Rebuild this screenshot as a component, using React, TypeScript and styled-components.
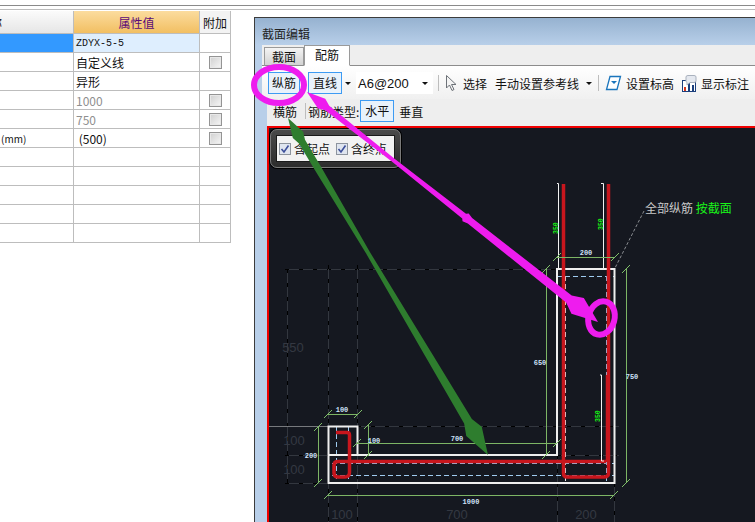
import React from 'react';
import styled, { createGlobalStyle } from 'styled-components';

const ROWS = [
  { value: 'ZDYX-5-5', kind: 'code', selected: true },
  { value: '自定义线', check: true },
  { value: '异形' },
  { value: '1000', muted: true, check: true },
  { value: '750', muted: true, check: true },
  { name: '(mm)', value: ' (500)', check: true },
  {},
  {},
  {},
  {},
  {},
];

type Pt = [number, number];

// polygon along a-b, stops are [fraction along the line, half width]
function ribbon(a: Pt, b: Pt, stops: [number, number][]) {
  const dx = b[0] - a[0];
  const dy = b[1] - a[1];
  const len = Math.hypot(dx, dy);
  const nx = -dy / len;
  const ny = dx / len;
  const left = stops.map(([t, w]) => `${a[0] + dx * t + nx * w},${a[1] + dy * t + ny * w}`);
  const right = stops.map(([t, w]) => `${a[0] + dx * t - nx * w},${a[1] + dy * t - ny * w}`);
  return [...left, ...right.reverse()].join(' ');
}

function Dash({ x1, y1, x2, y2 }: { x1: number; y1: number; x2: number; y2: number }) {
  return (
    <g>
      <line x1={x1} y1={y1} x2={x2} y2={y2} stroke="#33373f" />
      <line x1={x1} y1={y1} x2={x2} y2={y2} stroke="#000" strokeDasharray="4 10" />
    </g>
  );
}

function Tick({ x, y }: { x: number; y: number }) {
  return <path d={`M${x - 4} ${y + 4}L${x + 4} ${y - 4}`} stroke="#7fbf6a" fill="none" />;
}

function Drawing() {
  const green = '#7db565';
  const red = '#c8161d';
  const blue = '#9fcbf0';
  return (
    <DrawingSvg viewBox="269 128 486 394">
      {/* grid lines */}
      <Dash x1={285} y1={269.5} x2={555} y2={269.5} />
      <Dash x1={287.5} y1={269} x2={287.5} y2={484} />
      <Dash x1={328.5} y1={265} x2={328.5} y2={522} />
      <Dash x1={357.5} y1={265} x2={357.5} y2={522} />
      <Dash x1={557.5} y1={455} x2={557.5} y2={522} />
      <Dash x1={614.5} y1={483} x2={614.5} y2={522} />
      <Dash x1={285} y1={455.5} x2={328} y2={455.5} />
      <Dash x1={285} y1={483.5} x2={328} y2={483.5} />
      <Dash x1={357} y1={426.5} x2={619} y2={426.5} />
      <Dash x1={557} y1={455.5} x2={619} y2={455.5} />
      <line x1={269} y1={426.5} x2={328} y2={426.5} stroke="#77797d" />

      <DimText x={293} y={352}>550</DimText>
      <DimText x={294} y={445}>100</DimText>
      <DimText x={294} y={474}>100</DimText>
      <DimText x={342} y={519}>100</DimText>
      <DimText x={457} y={519}>700</DimText>
      <DimText x={586} y={519}>200</DimText>

      {/* dashed bar outlines */}
      <g stroke={blue} strokeDasharray="5 3" fill="none">
        <line x1={332} y1={463.5} x2={615} y2={463.5} />
        <line x1={332} y1={475.5} x2={615} y2={475.5} />
        <line x1={336.5} y1={426} x2={336.5} y2={483} />
        <line x1={348.5} y1={426} x2={348.5} y2={483} />
        <line x1={606.5} y1={276} x2={606.5} y2={483} />
        <line x1={557} y1={276.5} x2={615} y2={276.5} />
      </g>
      <line x1={565.5} y1={276} x2={565.5} y2={483} stroke="#e8e8e8" strokeDasharray="5 3" />

      {/* section outline */}
      <polyline
        points="357,455 328.5,455 328.5,483 614.5,483 614.5,269 557,269 557,455 357.5,455 357.5,426.5 328.5,426.5 328.5,456"
        fill="none"
        stroke="#efefef"
        strokeWidth={2}
      />

      {/* rebar */}
      <g stroke={red} fill="none" strokeWidth={3.5}>
        <path d="M336 432.5H347Q349.500 432.500 349.500 435V472Q349.500 477 345 477H338Q334 477 334 473V465Q334 461.500 338 461.500H606" />
        <path d="M563.500 184V473Q563.500 477 567 477H604Q608.500 477 608.500 473V184" />
        <path d="M607.500 375V462" />
      </g>
      <polyline points="557,183.500 558.500,183.500 558.500,268" fill="none" stroke="#f2f2f2" />
      <polyline points="601,183.500 603.500,183.500 603.500,268" fill="none" stroke="#f2f2f2" />
      <polyline points="600,375 601.500,375 601.500,461 604,461" fill="none" stroke="#f2f2f2" />
      <TinyMark transform="translate(558 234) rotate(-90)" x={0} y={0}>350</TinyMark>
      <TinyMark transform="translate(603 230) rotate(-90)" x={0} y={0}>350</TinyMark>
      <TinyMark transform="translate(600 422) rotate(-90)" x={0} y={0}>350</TinyMark>

      {/* dimensions */}
      <g stroke={green} fill="none">
        <line x1={557} y1={257.500} x2={615} y2={257.500} />
        <line x1={328} y1={414.500} x2={358} y2={414.500} />
        <line x1={546.500} y1={269} x2={546.500} y2={455} />
        <line x1={626.500} y1={269} x2={626.500} y2={483} />
        <line x1={357} y1={443.500} x2={557} y2={443.500} />
        <line x1={328} y1={495.500} x2={614} y2={495.500} />
        <line x1={368.500} y1={424} x2={368.500} y2={456} />
        <line x1={318.500} y1={426} x2={318.500} y2={483} />
      </g>
      <Tick x={557} y={257} />
      <Tick x={615} y={257} />
      <Tick x={328} y={414} />
      <Tick x={358} y={414} />
      <Tick x={546} y={269} />
      <Tick x={546} y={455} />
      <Tick x={626} y={269} />
      <Tick x={626} y={483} />
      <Tick x={357} y={443} />
      <Tick x={557} y={443} />
      <Tick x={328} y={495} />
      <Tick x={614} y={495} />
      <Tick x={368} y={425} />
      <Tick x={368} y={455} />
      <Tick x={318} y={427} />
      <Tick x={318} y={483} />

      <SizeText x={586} y={255}>200</SizeText>
      <SizeText x={342} y={412}>100</SizeText>
      <SizeText x={374} y={443}>100</SizeText>
      <SizeText x={457} y={441}>700</SizeText>
      <SizeText x={311} y={458}>200</SizeText>
      <SizeText x={471} y={504}>1000</SizeText>
      <SizeText x={540} y={365}>650</SizeText>
      <SizeText x={632} y={379}>750</SizeText>

      {/* leader and note */}
      <line x1={644} y1={211} x2={615} y2={268} stroke="#8a8d92" strokeDasharray="3 2" />
      <NoteText x={645} y={213}>
        全部纵筋 <tspan fill="#19f519">按截面</tspan>
      </NoteText>
    </DrawingSvg>
  );
}

function Annotations() {
  const magenta = '#ee1cee';
  const green = '#2e7d2e';
  return (
    <AnnotationSvg viewBox="0 0 755 522">
      <polygon
        fill={green}
        points={ribbon([288, 118], [488, 455], [
          [0, 0],
          [0.05, 6],
          [0.07, 3.5],
          [0.15, 3.5],
          [0.4, 2],
          [0.7, 3.5],
          [0.9, 4.5],
          [0.93, 9],
          [1, 0],
        ])}
      />
      <polygon
        fill={magenta}
        points={ribbon([307, 92], [598, 322], [
          [0, 0],
          [0.05, 6],
          [0.07, 3],
          [0.3, 2],
          [0.54, 3],
          [0.545, 5],
          [0.56, 3.500],
          [0.9, 4.500],
          [0.93, 10],
          [1, 0],
        ])}
      />
      <ellipse cx={279} cy={85} rx={25} ry={18} fill="none" stroke={magenta} strokeWidth={6} />
      <ellipse cx={601.5} cy={318} rx={13} ry={17} fill="none" stroke={magenta} strokeWidth={6} transform="rotate(15 601.500 318)" />
    </AnnotationSvg>
  );
}

function CheckMark() {
  return (
    <svg width="12" height="12" viewBox="0 0 12 12">
      <rect x="0.5" y="0.5" width="11" height="11" fill="#dfe5ef" stroke="#8d949e" />
      <path d="M2.500 6L5 9L9.500 2.500" fill="none" stroke="#3c4f9a" strokeWidth="1.600" />
    </svg>
  );
}

export default function App() {
  return (
    <Page>
      <GlobalStyle />
      <TopRules />
      <Main>
        <PropertyTable>
          <NameHead>
            <span>称</span>
          </NameHead>
          <ValueHead>属性值</ValueHead>
          <ExtraHead>附加</ExtraHead>
          {ROWS.map((row, idx) => (
            <React.Fragment key={idx}>
              <NameCell $selected={row.selected}>{row.name}</NameCell>
              <ValueCell $selected={row.selected} $muted={row.muted} $code={row.kind === 'code'}>
                {row.value}
              </ValueCell>
              <ExtraCell>{row.check && <TableCheck />}</ExtraCell>
            </React.Fragment>
          ))}
        </PropertyTable>

        <Window>
          <TitleBar>截面编辑</TitleBar>
          <TabStrip>
            <Tab>截面</Tab>
            <Tab $active>配筋</Tab>
          </TabStrip>
          <ToolRow>
            <ToolButton $active $width={32}>
              纵筋
            </ToolButton>
            <ToolButton $active $width={34} $gap={8}>
              直线
            </ToolButton>
            <CaretMark />
            <Combo>
              A6@200
              <CaretMark />
            </Combo>
            <Divider />
            <svg width="12" height="18" viewBox="0 0 12 18">
              <path d="M1.500 1.500V14L4.500 11L7 16.500L9 15.500L6.500 10.500H11Z" fill="#f4f4f4" stroke="#6d7278" />
            </svg>
            <ToolLabel $gap={6}>选择</ToolLabel>
            <ToolLabel $gap={8}>手动设置参考线</ToolLabel>
            <CaretMark $gap={7} />
            <Divider $gap={1} />
            <svg width="17" height="16" viewBox="0 0 17 16">
              <path d="M5 1.500H15.500L12 14.500H1.500Z" fill="#fff" stroke="#1b75bc" strokeWidth="1.300" />
              <path d="M6 6H12L9 9Z" fill="#1b75bc" />
            </svg>
            <ToolLabel $gap={4}>设置标高</ToolLabel>
            <IconSlot>
              <svg width="15" height="17" viewBox="0 0 15 17">
                <rect x="0.500" y="5.500" width="13" height="11" fill="#fff" stroke="#1c3f7c" />
                <rect x="2" y="12" width="2" height="4" fill="#d5391f" />
                <rect x="6" y="8" width="2" height="8" fill="#1c3f7c" />
                <rect x="10" y="10" width="2" height="6" fill="#1c3f7c" />
                <path d="M4 2Q4 .500 6 .500H12Q14 .500 14 2V6Q14 7.500 12 7.500H8L5 10V7.500Q4 7 4 6Z" fill="#e4e8ef" stroke="#a9b1bd" />
              </svg>
            </IconSlot>
            <ToolLabel $gap={4}>显示标注</ToolLabel>
          </ToolRow>
          <SubRow>
            <ToolLabel $gap={6}>横筋</ToolLabel>
            <Divider $gap={8} $rightGap={2} />
            <ToolLabel>钢筋类型:</ToolLabel>
            <ToolButton $active $width={34} $gap={1}>
              水平
            </ToolButton>
            <ToolLabel $gap={5}>垂直</ToolLabel>
          </SubRow>
          <CanvasArea>
            <Drawing />
            <FloatPanel>
              <FloatInner>
                <FloatOption>
                  <CheckMark />
                  含起点
                </FloatOption>
                <FloatOption>
                  <CheckMark />
                  含终点
                </FloatOption>
              </FloatInner>
            </FloatPanel>
          </CanvasArea>
        </Window>
      </Main>
      <Annotations />
    </Page>
  );
}

const CJK = '"Noto Sans CJK SC", "Liberation Sans", sans-serif';

const GlobalStyle = createGlobalStyle`
  html, body {
    margin: 0;
    background: #fff;
    font-family: ${CJK};
    font-size: 12px;
    color: #111;
  }
`;

const Page = styled.div`
  position: relative;
  width: 755px;
  height: 522px;
  overflow: hidden;
  background: #fff;
`;

const TopRules = styled.div`
  box-sizing: border-box;
  height: 5px;
  margin-top: 5px;
  margin-bottom: 1px;
  border-top: 1px solid #8a8a8a;
  border-bottom: 1px solid #bcbcbc;
`;

const Main = styled.div`
  display: flex;
  align-items: flex-start;
`;

const PropertyTable = styled.div`
  display: grid;
  grid-template-columns: 74px 126px 31px;
  grid-template-rows: 23px repeat(11, 19px);
  flex: none;
  width: 231px;
`;

const cell = `
  display: flex;
  align-items: center;
  box-sizing: border-box;
  border-right: 1px solid #bdbdbd;
  border-bottom: 1px solid #bdbdbd;
  overflow: hidden;
  white-space: nowrap;
`;

const NameHead = styled.div`
  ${cell}
  justify-content: flex-end;
  padding-right: 71px;
  background: linear-gradient(#fbfbfb, #e6e6e6);
  span {
    flex: none;
  }
`;

const ValueHead = styled.div`
  ${cell}
  justify-content: center;
  background: linear-gradient(#fbdc9e, #f2bf62);
  color: #5a0a78;
`;

const ExtraHead = styled.div`
  ${cell}
  justify-content: center;
  background: #f3f3f3;
`;

const NameCell = styled.div<{ $selected?: boolean }>`
  ${cell}
  padding-left: 1px;
  font-size: 10px;
  background: ${(p) => (p.$selected ? '#3399ff' : '#fff')};
`;

const ValueCell = styled.div<{ $selected?: boolean; $muted?: boolean; $code?: boolean }>`
  ${cell}
  padding-left: 2px;
  white-space: pre;
  background: ${(p) => (p.$selected ? '#deeefe' : '#fff')};
  color: ${(p) => (p.$muted ? '#8f8f8f' : '#111')};
  font-family: ${(p) => (p.$code ? '"Liberation Mono", monospace' : CJK)};
  font-size: ${(p) => (p.$code ? '10px' : '12px')};
`;

const ExtraCell = styled.div`
  ${cell}
  justify-content: center;
`;

const TableCheck = styled.span`
  display: block;
  box-sizing: border-box;
  width: 13px;
  height: 13px;
  border: 1px solid #949494;
  outline: 1px solid #e8e8e8;
  outline-offset: -2px;
  background: linear-gradient(135deg, #cfcfcf, #f6f6f6);
`;

const Window = styled.div`
  display: flex;
  flex-direction: column;
  flex: none;
  box-sizing: border-box;
  width: 501px;
  height: 505px;
  margin-left: 23px;
  margin-top: 6px;
  padding-left: 7px;
  border-top: 1px solid #3c3c3c;
  border-left: 1px solid #3c3c3c;
  background: linear-gradient(#96b2d0, #b8cfe9 27px);
`;

const TitleBar = styled.div`
  flex: none;
  display: flex;
  align-items: center;
  height: 27px;
  padding-top: 4px;
  box-sizing: border-box;
  color: #222;
`;

const TabStrip = styled.div`
  flex: none;
  display: flex;
  align-items: flex-end;
  box-sizing: border-box;
  height: 21px;
  padding-left: 2px;
  background: #eeeeee;
  border-bottom: 1px solid #8c8c8c;
`;

const Tab = styled.div<{ $active?: boolean }>`
  position: relative;
  box-sizing: border-box;
  width: ${(p) => (p.$active ? '46px' : '40px')};
  height: ${(p) => (p.$active ? '21px' : '19px')};
  margin-bottom: -1px;
  text-align: center;
  line-height: 18px;
  border: 1px solid #9a9a9a;
  border-bottom: ${(p) => (p.$active ? '1px solid #fff' : '1px solid #8c8c8c')};
  background: ${(p) => (p.$active ? '#fff' : 'linear-gradient(#f4f4f4, #d2d2d2)')};
`;

const ToolRow = styled.div`
  flex: none;
  display: flex;
  align-items: center;
  box-sizing: border-box;
  height: 33px;
  padding: 1px 0 0 6px;
  white-space: nowrap;
  background: linear-gradient(#fff, #f0f0f0);
`;

const SubRow = styled.div`
  flex: none;
  display: flex;
  align-items: center;
  box-sizing: border-box;
  height: 27px;
  margin-left: 5px;
  padding-bottom: 3px;
  white-space: nowrap;
  background: #eeeeee;
`;

const ToolButton = styled.div<{ $active?: boolean; $width: number; $gap?: number }>`
  flex: none;
  box-sizing: border-box;
  width: ${(p) => p.$width}px;
  height: 22px;
  margin-left: ${(p) => p.$gap ?? 0}px;
  line-height: 20px;
  text-align: center;
  border: 1px solid ${(p) => (p.$active ? '#3d9bf3' : 'transparent')};
  background: ${(p) => (p.$active ? '#e9f2fb' : 'transparent')};
`;

const ToolLabel = styled.span<{ $gap?: number }>`
  flex: none;
  margin-left: ${(p) => p.$gap ?? 0}px;
`;

const CaretMark = styled.span<{ $gap?: number }>`
  flex: none;
  width: 0;
  height: 0;
  margin: 1px 5px 0 ${(p) => p.$gap ?? 3}px;
  border-left: 3px solid transparent;
  border-right: 3px solid transparent;
  border-top: 3px solid #111;
`;

const Combo = styled.div`
  flex: none;
  display: flex;
  align-items: center;
  justify-content: space-between;
  box-sizing: border-box;
  width: 77px;
  height: 22px;
  padding-left: 2px;
  font-family: "Liberation Sans", sans-serif;
  font-size: 13px;
  background: #fff;
`;

const Divider = styled.span<{ $gap?: number; $rightGap?: number }>`
  flex: none;
  width: 1px;
  height: 16px;
  margin: 0 ${(p) => p.$rightGap ?? 6}px 0 ${(p) => p.$gap ?? 5}px;
  background: #bdbdbd;
`;

const IconSlot = styled.span`
  flex: none;
  display: flex;
  margin-left: 8px;
`;

const CanvasArea = styled.div`
  position: relative;
  flex: 1;
  min-height: 0;
  margin-left: 5px;
  border-top: 2px solid #f00000;
  border-left: 2px solid #f00000;
  background: #151820;
`;

const DrawingSvg = styled.svg`
  display: block;
  width: 486px;
  height: 394px;
`;

const DimText = styled.text`
  font-family: "Liberation Sans", sans-serif;
  font-size: 13px;
  text-anchor: middle;
  fill: #343842;
`;

const SizeText = styled.text`
  font-family: "Liberation Mono", monospace;
  font-size: 7px;
  font-weight: bold;
  text-anchor: middle;
  fill: #cfe2fa;
`;

const TinyMark = styled.text`
  font-family: "Liberation Mono", monospace;
  font-size: 6.5px;
  font-weight: bold;
  fill: #16f016;
`;

const NoteText = styled.text`
  font-family: ${CJK};
  font-size: 12px;
  fill: #c9c9c9;
`;

const FloatPanel = styled.div`
  position: absolute;
  left: 1px;
  top: 1px;
  box-sizing: border-box;
  width: 131px;
  height: 39px;
  padding: 5px;
  border: 1px solid #7a7a7a;
  border-radius: 7px;
  background: linear-gradient(#4a4a4a, #2c2c2c);
  box-shadow: 0 0 0 1px #000;
`;

const FloatInner = styled.div`
  display: flex;
  align-items: center;
  gap: 6px;
  box-sizing: border-box;
  height: 100%;
  padding-left: 2px;
  border: 1px solid #1a1a1a;
  background: #f2f2f2;
`;

const FloatOption = styled.span`
  display: flex;
  align-items: center;
  gap: 3px;
  white-space: nowrap;
`;

const AnnotationSvg = styled.svg`
  position: absolute;
  left: 0;
  top: 0;
  width: 755px;
  height: 522px;
  pointer-events: none;
`;
